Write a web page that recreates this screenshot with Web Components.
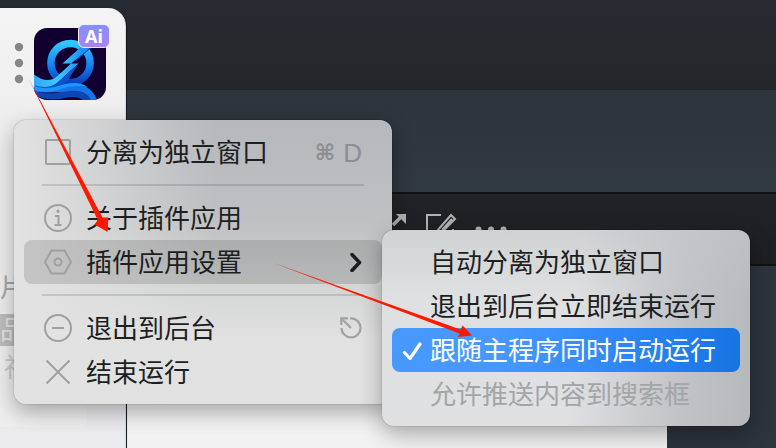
<!DOCTYPE html>
<html lang="zh-CN">
<head>
<meta charset="utf-8">
<title>插件应用设置</title>
<style>
  body {
    margin: 0;
    min-height: 100vh;
    display: flex;
    font-family: "Liberation Sans", "Noto Sans CJK SC", sans-serif;
    color: #1e1f21;
    overflow: hidden;
  }
</style>
</head>
<body>
<app-desktop>
  <launcher-window></launcher-window>
  <context-menu class="main" label="插件菜单">
    <menu-item shortcut="⌘,D">
      <svg slot="icon" viewBox="0 0 28 28"><rect x="2" y="2" width="24" height="24" rx="1"/></svg>
      分离为独立窗口
    </menu-item>
    <menu-separator></menu-separator>
    <menu-item>
      <svg slot="icon" viewBox="0 0 28 28"><circle cx="14" cy="14" r="13"/><circle cx="14" cy="7.2" r="1.2" fill="currentColor" stroke-width="1"/><path d="M11 12h3.5v9M10.5 21h7"/></svg>
      关于插件应用
    </menu-item>
    <menu-item active submenu>
      <svg slot="icon" viewBox="0 0 28 28"><path d="M7.5 2.5h13L27 14l-6.500 11.500h-13L1 14z"/><circle cx="14" cy="14" r="3.500"/></svg>
      插件应用设置
    </menu-item>
    <menu-separator></menu-separator>
    <menu-item>
      <svg slot="icon" viewBox="0 0 28 28"><circle cx="14" cy="14" r="13"/><path d="M8 14h12"/></svg>
      退出到后台
      <svg slot="end" width="22" height="22" viewBox="0 0 22 22" fill="none" stroke="#a3a3a3" stroke-width="2.200"><path d="M10 1.500A9.500 9.500 0 1 1 1.500 11M11 11L2 2M1.300 8V1.300H8"/></svg>
    </menu-item>
    <menu-item>
      <svg slot="icon" viewBox="0 0 28 28"><path d="M2.500 2.500l23 23M25.500 2.500l-23 23"/></svg>
      结束运行
    </menu-item>
  </context-menu>
  <context-menu class="sub" label="插件应用设置">
    <menu-item>自动分离为独立窗口</menu-item>
    <menu-item>退出到后台立即结束运行</menu-item>
    <menu-item checked>跟随主程序同时启动运行</menu-item>
    <menu-item disabled>允许推送内容到搜索框</menu-item>
  </context-menu>
  <guide-arrows></guide-arrows>
</app-desktop>

<script>
function attach(el, html) {
  const template = document.createElement("template");
  template.innerHTML = html;
  const root = el.attachShadow({ mode: "open" });
  root.appendChild(template.content.cloneNode(true));
  return root;
}

// editor in the background, everything else floats on top of it
class AppDesktop extends HTMLElement {
  constructor() {
    super();
    attach(this, `
      <style>
        :host {
          flex: 1;
          position: relative;
          display: flex;
          flex-direction: column;
          background: #2d343c;
        }
        .titlebar { height: 90px; background: linear-gradient(#262b31, #23272b); }
        .tabs { height: 102px; background: linear-gradient(#2d343c, #303840); }
        .toolbar {
          height: 70px;
          padding-left: 392px;
          border-top: 2px solid #111214;
          border-bottom: 2px solid #111214;
          background: linear-gradient(#202428, #1c1f21);
        }
        .toolbar svg { display: block; margin-top: 18px; }
        .paper {
          position: absolute;
          top: 270px;
          bottom: 0;
          left: 127px;
          right: 109px;
          background: #f2f2f2;
        }
        ::slotted(launcher-window) { position: absolute; top: 8px; bottom: 0; left: 0; }
        ::slotted(.main) { position: absolute; top: 120px; left: 14px; width: 378px; }
        ::slotted(.sub) {
          position: absolute;
          top: 230px;
          left: 382px;
          width: 368px;
          --icon-size: 20px;
          --icon-gap: 8px;
          --row-padding: 10px;
          --menu-bg: linear-gradient(#c4c5c788, #d8d9db00 70px),
            linear-gradient(95deg, #dfe0e2 52%, #c2c5c8 80%, #b5b9bc);
        }
        ::slotted(guide-arrows) { position: absolute; inset: 0; pointer-events: none; }
      </style>
      <div class="titlebar"></div>
      <div class="tabs"></div>
      <div class="toolbar">
        <svg width="120" height="24" viewBox="0 0 120 24" fill="none" stroke="#b2b2b0" stroke-width="2">
          <path d="M1 13l9-9" stroke-width="3.500"/>
          <path d="M4 2h10v10z" fill="#b2b2b0" stroke="none"/>
          <path d="M49 3H35v20h26v-6M45 19L59 3l4 4-14 14M50 18L60 7"/>
          <g fill="#b2b2b0" stroke="none"><circle cx="86.500" cy="17.500" r="3"/><circle cx="99" cy="17.500" r="3"/><circle cx="111.500" cy="17.500" r="3"/></g>
        </svg>
      </div>
      <div class="paper"></div>
      <slot></slot>
    `);
  }
}

class LauncherWindow extends HTMLElement {
  constructor() {
    super();
    attach(this, `
      <style>
        :host {
          width: 126px;
          box-sizing: border-box;
          border-right: 1px solid #d8d8d8;
          border-radius: 0 18px 0 0;
          background: linear-gradient(#f4f4f4 0, #eeeeee 110px, #e6e6e8 300px, #ececef);
          box-shadow: 1px 0 1px #00000066;
          overflow: hidden;
        }
        header { display: flex; align-items: center; gap: 10px; padding: 20px 0 0 14px; }
        button { border: 0; padding: 0; background: none; display: block; }
        svg { display: block; }
        .app { position: relative; }
        .badge {
          position: absolute;
          top: -4px;
          right: -4px;
          width: 32px;
          height: 24px;
          border: 1px solid #f1ecff;
          border-radius: 6px;
          box-sizing: border-box;
          background: linear-gradient(#8490f8, #a983f5);
          color: #fff;
          font: bold 18px/22px "Noto Sans", sans-serif;
          text-align: center;
        }
        .content {
          width: 87px;
          box-sizing: border-box;
          height: 291px;
          margin-top: 36px;
          padding-top: 130px;
          border-radius: 0 6px 6px 0;
          background: #eeeeef;
          color: #a8a8a8;
        }
        .content div { font-size: 26px; line-height: 44px; }
        .content .tag { width: 30px; margin-top: 4px; line-height: 32px; background: #bdbdbd; color: #e2e2e2; }
        .content .faint { margin-left: 4px; color: #cacaca; }
      </style>
      <header>
        <button aria-label="更多"><svg width="10" height="42" viewBox="0 0 10 42" fill="#868686"><circle cx="5" cy="4" r="4.200"/><circle cx="5" cy="20" r="4.200"/><circle cx="5" cy="36" r="4.200"/></svg></button>
        <div class="app">
          <svg width="72" height="72" viewBox="0 0 72 72">
            <defs>
              <linearGradient id="ring" x2="0" y2="1"><stop stop-color="#31c6ff"/><stop offset=".5" stop-color="#168bf5"/><stop offset="1" stop-color="#0740bd"/></linearGradient>
              <linearGradient id="wave" x2="1" y2="0"><stop stop-color="#2fa8ff"/><stop offset=".4" stop-color="#3cc8ff"/><stop offset="1" stop-color="#1a7df0"/></linearGradient>
              <clipPath id="tile"><rect width="72" height="72" rx="13"/></clipPath>
            </defs>
            <g clip-path="url(#tile)">
              <rect width="72" height="72" fill="#11002f"/>
              <circle cx="36.500" cy="35" r="19.600" fill="none" stroke="url(#ring)" stroke-width="7.500"/>
              <path d="M52 16l5 4-15 13-3-5z" fill="#0c46b4"/>
              <path d="M50 16L28.500 35.500h8.500L23 48.500q-10 8-23-2V58q12 6 23-3L44.500 35.500H37L57 19z" fill="url(#wave)"/>
              <path d="M44.500 35.500L23 55Q13 62 0 57q12 7 25 1 5-2 9-6z" fill="#0b52cc"/>
              <path d="M0 59q12 5 27-1c16-5 31-1 36 14H50C42 60 24 66 0 64z" fill="#1475e8"/>
              <path d="M0 58q13 5 27-1 17-5 27 2-15-3-27 2-13 5-27 1z" fill="#1b96ff"/>
              <path d="M0 63c20 6 31-2 45 0q9 2 12 9H49q-7-5-18-2-16 4-31-3z" fill="#0c46b4"/>
            </g>
          </svg>
          <span class="badge">Ai</span>
        </div>
      </header>
      <div class="content">
        <div>片</div>
        <div class="tag">品</div>
        <div class="faint">社</div>
      </div>
    `);
  }
}

class ContextMenu extends HTMLElement {
  constructor() {
    super();
    const root = attach(this, `
      <style>
        :host {
          display: block;
          box-sizing: border-box;
          padding: 10px 0;
          border-radius: 12px;
          background: var(--menu-bg,
            linear-gradient(90deg, #e2e2e2, #e2e2e2bb 60px, #e2e2e200 200px),
            linear-gradient(#b5b8bc, #bfc0c2 100px, #d5d6d6 170px, #e1e1e1 220px));
          box-shadow: 0 0 1px #000000aa, 0 8px 22px #00000050;
        }
        [role="menu"] { display: flex; flex-direction: column; }
      </style>
      <div role="menu"><slot></slot></div>
    `);
    root.querySelector("[role=menu]").setAttribute("aria-label", this.getAttribute("label"));
  }
}

class MenuItem extends HTMLElement {
  constructor() {
    super();
    const root = attach(this, `
      <style>
        :host { display: block; padding: 0 10px; }
        button {
          display: flex;
          align-items: center;
          width: 100%;
          height: 44px;
          padding: 0 var(--row-padding, 20px);
          border: 0;
          border-radius: 8px;
          background: none;
          color: inherit;
          font: inherit;
          font-size: 26px;
          line-height: 42px;
          text-align: left;
          white-space: nowrap;
        }
        .icon {
          flex: none;
          width: var(--icon-size, 28px);
          height: var(--icon-size, 28px);
          margin-right: var(--icon-gap, 14px);
          color: #a0a0a0;
        }
        ::slotted(svg[slot="icon"]) {
          display: block;
          width: 100%;
          height: 100%;
          fill: none;
          stroke: currentColor;
          stroke-width: 2;
        }
        .icon svg { display: block; }
        .text { flex: 1; padding-top: 2px; }
        .end { display: flex; align-items: center; gap: 8px; color: #8c8e91; }
        .key { padding-top: 2px; }
        .key:first-of-type { font: bold 22px/42px "DejaVu Sans", sans-serif; }
        :host([active]) button { background: #00000021; }
        :host([checked]) button { background: linear-gradient(90deg, #4799ff 30%, #2f87f7 65%, #1774e1); color: #fff; }
        :host([disabled]) button { color: #a3a5a7; }
      </style>
      <button type="button" role="menuitem">
        <span class="icon"><slot name="icon"></slot></span>
        <span class="text"><slot></slot></span>
        <span class="end"><slot name="end"></slot></span>
      </button>
    `);
    const end = root.querySelector(".end");
    const button = root.querySelector("button");

    if (this.hasAttribute("shortcut")) {
      this.getAttribute("shortcut").split(",").forEach((key) => {
        const span = document.createElement("span");
        span.className = "key";
        span.textContent = key;
        end.appendChild(span);
      });
    }
    if (this.hasAttribute("submenu")) {
      end.innerHTML = `<svg width="14" height="20" viewBox="0 0 14 20" fill="none" stroke="#1d1d1e" stroke-width="3.500" stroke-linecap="round" stroke-linejoin="round"><path d="M4 2.500l7.500 8-7.500 8"/></svg>`;
    }
    if (this.hasAttribute("checked")) {
      button.setAttribute("role", "menuitemcheckbox");
      button.setAttribute("aria-checked", "true");
      root.querySelector(".icon").innerHTML = `<svg width="20" height="20" viewBox="0 0 20 20" fill="none" stroke="#fff" stroke-width="3.200" stroke-linecap="round" stroke-linejoin="round"><path d="M2.500 12.500l5.500 6L18 4"/></svg>`;
    }
    button.disabled = this.hasAttribute("disabled");
  }
}

class MenuSeparator extends HTMLElement {
  constructor() {
    super();
    attach(this, `
      <style>
        :host { display: block; padding: 10px 28px; }
        div { height: 2px; background: #00000020; }
      </style>
      <div role="separator"></div>
    `);
  }
}

// red pointers drawn over both menus
class GuideArrows extends HTMLElement {
  constructor() {
    super();
    attach(this, `
      <style>
        :host { display: block; }
        svg { display: block; }
      </style>
      <svg width="500" height="360" viewBox="0 0 500 360" fill="#ff1800">
        <path d="M28.500 78.500L102.500 217.500 108.300 217.500 107.700 232 94.500 224.500 98 220.500z"/>
        <path d="M273 262.800L460.500 329.500 462.700 325.500 472 335.500 458 337 459.500 333.500z"/>
      </svg>
    `);
  }
}

customElements.define("app-desktop", AppDesktop);
customElements.define("launcher-window", LauncherWindow);
customElements.define("context-menu", ContextMenu);
customElements.define("menu-item", MenuItem);
customElements.define("menu-separator", MenuSeparator);
customElements.define("guide-arrows", GuideArrows);
</script>
</body>
</html>
